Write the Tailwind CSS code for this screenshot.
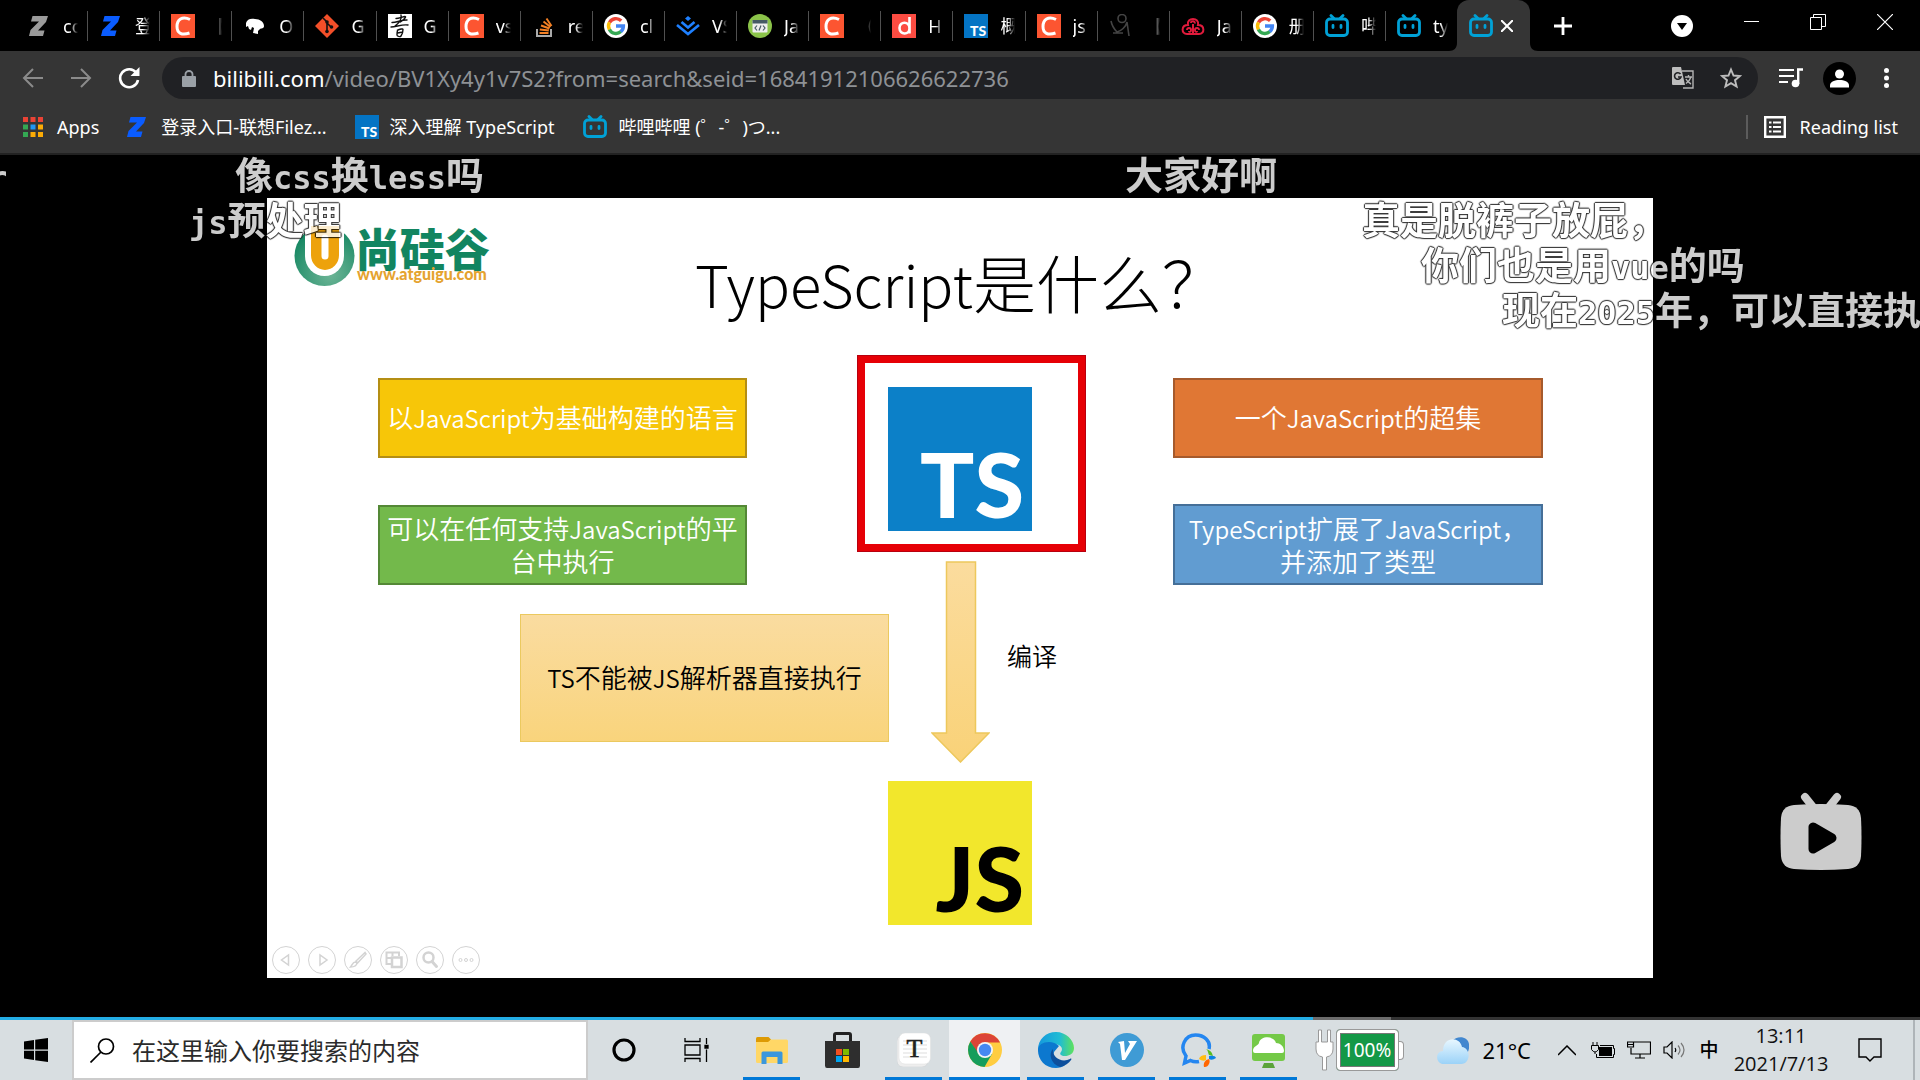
<!DOCTYPE html>
<html lang="zh-CN">
<head>
<meta charset="utf-8">
<title>TypeScript是什么？_哔哩哔哩</title>
<script src="https://cdn.jsdelivr.net/npm/@tailwindcss/browser@4"></script>
</head>
<body class="flex h-screen flex-col overflow-hidden bg-black font-['Noto_Sans','Noto_Sans_CJK_SC',sans-serif] text-white">

<svg class="hidden" aria-hidden="true">
  <symbol id="bili" viewBox="0 0 24 24"><g fill="none" stroke="#00a1d6" stroke-width="2.8" stroke-linecap="round" stroke-linejoin="round"><rect x="1.5" y="5" width="21" height="16.5" rx="3.5"/><path d="M6 1.5 9 4.5M18 1.5 15 4.5M8 11.5v2M16 11.5v2"/></g></symbol>
  <symbol id="csdn" viewBox="0 0 24 24"><path fill="#fc5531" d="M0 0h24v24H0z"/><path fill="none" stroke="#fff" stroke-width="3" d="M19 5.5C11 1.500 6 6 6 12.500c0 7 5 9 12.500 6.500"/></symbol>
  <symbol id="zed" viewBox="0 0 20 22"><path d="M3.500 1H19l-2 6-8 8.500h6.500L14 21H0l1.500-6L10 6.500H2z"/></symbol>
  <symbol id="google" viewBox="0 0 24 24"><circle cx="12" cy="12" r="12" fill="#fff"/><g fill="none" stroke-width="3.400"><path stroke="#ea4335" d="M5.500 8.500A7.400 7.400 0 0 1 17.200 6.800"/><path stroke="#fbbc05" d="M5.500 8.400a7.400 7.400 0 0 0 0 7.200"/><path stroke="#34a853" d="M5.400 15.400a7.400 7.400 0 0 0 11.500 2.200"/><path stroke="#4285f4" d="M12 12h7.400a7.400 7.400 0 0 1-2.600 5.700"/></g></symbol>
  <symbol id="tslogo" viewBox="0 0 24 24"><path fill="#0474c4" d="M0 0h24v24H0z"/><text x="6" y="22" font-family="Lato" font-weight="900" font-size="14" fill="#fff">TS</text></symbol>
</svg>

<!-- Tab strip -->
<header class="relative flex h-[51px] shrink-0 items-stretch bg-black pl-4 text-[18px]">
  <nav class="flex w-[75.7%] divide-x divide-[#505050] py-[11px] [&>a]:flex [&>a]:h-[30px] [&>a]:min-w-0 [&>a]:flex-1 [&>a]:items-center [&>a]:gap-3 [&>a]:pl-[11px] [&_svg]:size-6 [&_svg]:shrink-0 [&_span]:w-[15px] [&_span]:shrink-0 [&_span]:overflow-hidden [&_span]:whitespace-nowrap [&_span]:leading-[30px] [&_span]:[mask-image:linear-gradient(to_right,black_50%,transparent)]" aria-label="Tabs">
    <a href="#"><svg class="p-px" fill="#9a9a9a"><use href="#zed"/></svg><span>co</span></a>
    <a href="#"><svg class="p-px" fill="#0a5cff"><use href="#zed"/></svg><span>登录</span></a>
    <a href="#"><svg><use href="#csdn"/></svg><span>【</span></a>
    <a href="#"><svg viewBox="0 0 24 24"><path fill="#fff" d="M3 9c1-4 5-5 9-4 5 0 9 3 9 7 0 3-3 2-4 3l-2 2v3l-5-1 1-5-2-1-1 3-2-1-1-3-2 1z"/></svg><span>O</span></a>
    <a href="#"><svg viewBox="0 0 24 24"><path fill="#f34f29" d="m12 0 12 12-12 12L0 12z"/><path stroke="#111" stroke-width="1.600" fill="none" d="m8 4 4 4v10M12 9l4 4"/><circle cx="12" cy="8" r="1.800" fill="#111"/><circle cx="12" cy="17.500" r="1.800" fill="#111"/><circle cx="16.500" cy="13" r="1.800" fill="#111"/></svg><span>G</span></a>
    <a href="#"><svg viewBox="0 0 24 24"><path fill="#fff" d="M0 0h24v24H0z"/><path fill="none" stroke="#111" stroke-width="1.400" stroke-linecap="round" d="M8 4.500c3 0 7-2 9-2s-2 4-5 5.500M4 8.500c5 0 10-3 15-2.500M13 1c1 4-2 8-6 11M3 13c5 0 11-3 17-2M9 16.500c3-1.500 6-2 6-1s-1 5-2 6.500-4 0-4-1 0-3 .500-4.500zM9.500 19l4-.800"/></svg><span>G</span></a>
    <a href="#"><svg><use href="#csdn"/></svg><span>vs</span></a>
    <a href="#"><svg viewBox="0 0 24 24"><path fill="none" stroke="#aaa" stroke-width="2" d="M5 15v7h14v-7"/><path stroke="#f48024" stroke-width="2" d="M7.500 19h9M7.800 15.500l9 1M9 11.500l8.500 3M11.500 7.500l7 5.500M14.500 4.500l5 7.500"/></svg><span>re</span></a>
    <a href="#"><svg><use href="#google"/></svg><span>cl</span></a>
    <a href="#"><svg viewBox="0 0 24 24"><g fill="none" stroke="#1e80ff" stroke-width="2.600"><path d="m1 11 11 9 11-9M5.500 8l6.500 5.500L18.500 8"/></g><path fill="#1e80ff" d="m12 2 3 2.500-3 2.500-3-2.500z"/></svg><span>VS</span></a>
    <a href="#"><svg viewBox="0 0 24 24"><circle cx="12" cy="12" r="12" fill="#8bc34a"/><rect x="4.500" y="6" width="15" height="12.500" rx="1" fill="#eee"/><path fill="#455a64" d="M4.500 6h15v3.500h-15z"/><path fill="none" stroke="#455a64" stroke-width="1.200" d="m9 11.500-2 2.500 2 2.500M15 11.500l2 2.500-2 2.500M13 11.500l-2 5"/></svg><span>Ja</span></a>
    <a href="#"><svg><use href="#csdn"/></svg><span>（</span></a>
    <a href="#"><svg viewBox="0 0 24 24"><path fill="#fc4c42" d="M0 0h24v24H0z"/><path fill="none" stroke="#fff" stroke-width="2.600" d="M17.500 3v16.500M17.500 14.500c0 7-10 6.500-10-.500s10-7 10 .500z"/></svg><span>H</span></a>
    <a href="#"><svg><use href="#tslogo"/></svg><span>概</span></a>
    <a href="#"><svg><use href="#csdn"/></svg><span>js</span></a>
    <a href="#"><svg viewBox="0 0 24 24" fill="none" stroke="#444" stroke-width="1.600"><circle cx="13" cy="4.500" r="4"/><path d="M2 7c1 5 3 8 6 11 4-1 9-5 10-10l2 14M4 19h10"/></svg><span>【</span></a>
    <a href="#"><svg viewBox="0 0 24 24" fill="none" stroke="#e01b3c" stroke-width="2"><path d="M7 11c-2-8 12-8 10 0 7 0 7 9 1 9H6c-6 0-6-9 1-9z"/><path d="M10 9c0-3 5-2 3.500.500M6 16c0-3 4-2.500 4 0s-2 2-2 1M18 16c0-3-4-2.500-4 0s2 2 2 1M12 10v10"/></svg><span>Ja</span></a>
    <a href="#"><svg><use href="#google"/></svg><span>册</span></a>
    <a href="#"><svg><use href="#bili"/></svg><span>哔</span></a>
    <a href="#"><svg><use href="#bili"/></svg><span>ty</span></a>
  </nav>
  <div class="relative flex w-[73px] items-center gap-2 rounded-t-xl bg-[#353535] pl-3">
    <svg class="absolute bottom-0 -left-2 size-2" viewBox="0 0 8 8"><path fill="#353535" d="M8 0v8H0c5 0 8-3 8-8z"/></svg>
    <svg class="absolute -right-2 bottom-0 size-2" viewBox="0 0 8 8"><path fill="#353535" d="M0 0v8h8C3 8 0 5 0 0z"/></svg>
    <svg class="size-6"><use href="#bili"/></svg>
    <button aria-label="Close tab"><svg class="size-3" viewBox="0 0 12 12" stroke="#fff" stroke-width="2"><path d="m0 0 12 12M12 0 0 12"/></svg></button>
  </div>
  <button class="ml-6" aria-label="New tab"><svg class="size-[18px]" viewBox="0 0 18 18" stroke="#fff" stroke-width="2.800"><path d="M9 0v18M0 9h18"/></svg></button>
  <div class="ml-auto flex h-[43px] items-center gap-[51px] pr-[27px]">
    <button class="mt-2" aria-label="Tab search"><svg class="size-[22px]" viewBox="0 0 22 22"><circle cx="11" cy="11" r="11" fill="#fff"/><path d="M6 8h10l-5 7z"/></svg></button>
    <button aria-label="Minimize"><svg class="h-4 w-[15px]" viewBox="0 0 15 16" stroke="#fff"><path d="M0 7.500h15"/></svg></button>
    <button aria-label="Restore"><svg class="size-4" viewBox="0 0 16 16" fill="none" stroke="#fff"><path d="M.500 3.500h11v12H.500zM3.500 3.500V.500h12v12h-4"/></svg></button>
    <button aria-label="Close"><svg class="size-4" viewBox="0 0 16 16" stroke="#fff" stroke-width="1.200"><path d="m0 0 16 16M16 0 0 16"/></svg></button>
  </div>
</header>

<!-- Address bar -->
<div class="flex h-[54px] shrink-0 items-center bg-[#353535] pr-[31px] pl-[22px]">
  <div class="flex w-[140px] items-center gap-[26px]">
    <button aria-label="Back"><svg class="size-[22px]" viewBox="0 0 22 22" fill="none" stroke="#8b8b8b" stroke-width="2"><path d="M21 11H2M11 2l-9 9 9 9"/></svg></button>
    <button aria-label="Forward"><svg class="size-[22px]" viewBox="0 0 22 22" fill="none" stroke="#8b8b8b" stroke-width="2"><path d="M1 11h19M11 2l9 9-9 9"/></svg></button>
    <button aria-label="Reload"><svg class="size-[22px]" viewBox="0 0 22 22"><path fill="none" stroke="#fff" stroke-width="2.600" d="M18.500 6A9 9 0 1 0 20 13"/><path fill="#fff" d="M21.500 0v9h-9z"/></svg></button>
  </div>
  <div class="flex h-[42px] flex-1 items-center rounded-full bg-[#202124] pr-4 pl-5">
    <svg class="h-[17px] w-[14px]" viewBox="0 0 14 17"><path fill="#9aa0a6" d="M1 6h12a1 1 0 0 1 1 1v9a1 1 0 0 1-1 1H1a1 1 0 0 1-1-1V7a1 1 0 0 1 1-1z"/><path fill="none" stroke="#9aa0a6" stroke-width="1.800" d="M3.500 6V4a3.500 3 0 0 1 7 0v2"/></svg>
    <a href="#" class="ml-[17px] text-[22px] leading-[28px] text-[#8e9195]"><span class="text-white">bilibili.com</span>/video/BV1Xy4y1v7S2?from=search&amp;seid=16841912106626622736</a>
    <button class="ml-auto" aria-label="Translate"><svg class="size-[22px]" viewBox="0 0 22 22"><path fill="none" stroke="#b5b5b5" stroke-width="1.400" d="M10 4h11v17H11M13 10h7M16.500 8v2M19 10c-1 3-3 5-5 6.500M14 12c1 2 3 4 5 5"/><path fill="#bdbdbd" d="M1 0h8l4 18H1a1 1 0 0 1-1-1V1a1 1 0 0 1 1-1z"/><path fill="none" stroke="#202124" stroke-width="1.600" d="M8.500 7A3.300 3.300 0 1 0 9 10H6"/></svg></button>
    <button class="ml-[26px]" aria-label="Bookmark this page"><svg class="size-[22px]" viewBox="0 0 22 22" fill="none" stroke="#bdbdbd" stroke-width="1.900"><path d="m11 2.500 2.500 6 6.500.500-5 4.200 1.600 6.300-5.600-3.400-5.600 3.400L7 13.200 2 9l6.500-.500z"/></svg></button>
  </div>
  <button class="ml-[21px]" aria-label="Media controls"><svg class="h-[20px] w-6" viewBox="0 0 24 20"><path stroke="#fff" stroke-width="2.200" d="M0 2h15M0 8h15M0 14h9"/><circle cx="16.500" cy="15.500" r="3.800" fill="#fff"/><path fill="none" stroke="#fff" stroke-width="2.400" d="M19.200 16V1.500H24"/></svg></button>
  <button class="ml-5" aria-label="Profile"><svg class="size-[33px]" viewBox="0 0 33 33"><circle cx="16.500" cy="16.500" r="16.500"/><circle cx="16.500" cy="12" r="4.500" fill="#fff"/><path fill="#fff" d="M7 25.500v-2c0-4 5-5.500 9.500-5.500s9.500 1.500 9.500 5.500v2z"/></svg></button>
  <button class="ml-7" aria-label="Menu"><svg class="h-5 w-[5px]" viewBox="0 0 5 20" fill="#fff"><circle cx="2.500" cy="2.500" r="2.500"/><circle cx="2.500" cy="10" r="2.500"/><circle cx="2.500" cy="17.500" r="2.500"/></svg></button>
</div>

<!-- Bookmarks -->
<nav class="flex h-[50px] shrink-0 items-center border-b-2 border-[#222] bg-[#353535] pr-[22px] pb-1 pl-[23px] text-[18px] leading-6" aria-label="Bookmarks">
  <a href="#" class="flex items-center gap-[14px]"><svg class="size-5" viewBox="0 0 20 20"><path fill="#ea4335" d="M0 0h5v5H0zM7.500 0h5v5h-5zM15 0h5v5h-5z"/><path fill="#34a853" d="M0 7.500h5v5H0zM0 15h5v5H0z"/><path fill="#2196f3" d="M7.500 7.500h5v5h-5z"/><path fill="#fbab05" d="M15 7.500h5v5h-5zM7.500 15h5v5h-5zM15 15h5v5h-5z"/></svg>Apps</a>
  <a href="#" class="ml-7 flex items-center gap-[14px]"><svg class="h-6 w-5" fill="#0a5cff"><use href="#zed"/></svg>登录入口-联想Filez...</a>
  <a href="#" class="ml-7 flex items-center gap-[11px]"><svg class="size-6"><use href="#tslogo"/></svg>深入理解 TypeScript</a>
  <a href="#" class="ml-7 flex items-center gap-3"><svg class="size-6"><use href="#bili"/></svg>哔哩哔哩 (゜-゜)つ...</a>
  <button class="ml-auto flex items-center border-l-2 border-[#5c5c5c] pl-4"><svg class="mr-[14px] size-[22px]" viewBox="0 0 22 22"><path fill="none" stroke="#fff" stroke-width="2.400" d="M1.200 1.200h19.600v19.600H1.200z"/><path stroke="#fff" stroke-width="2" d="M5 6.500h2.500M9 6.500h8M5 11h2.500M9 11h8M5 15.500h2.500M9 15.500h8"/></svg>Reading list</button>
</nav>

<!-- Video player -->
<main class="relative flex min-h-0 flex-1 flex-col items-center justify-center overflow-hidden bg-black">
  <section class="relative aspect-[1386/780] h-[calc(100%-85px)] shrink-0 overflow-hidden bg-white font-['Noto_Sans_CJK_SC',sans-serif] text-[26px] leading-8 text-black [&_span]:text-[24px]">
    <!-- brand -->
    <div class="absolute top-[28px] left-[27px] flex items-center">
      <svg class="h-[60px] w-[61px]" viewBox="0 0 61 60"><defs><radialGradient id="g" cx=".6" cy=".8" r=".8"><stop offset="0" stop-color="#6db596"/><stop offset="1" stop-color="#128560"/></radialGradient></defs><circle cx="30.500" cy="30" r="30" fill="url(#g)"/><path fill="#fff" d="M11 0h39v30a19.500 20 0 0 1-39 0z"/><path fill="#eda20c" d="M17 0h28v29a14 15 0 0 1-28 0z"/><path stroke="#fff" stroke-width="7" stroke-linecap="round" d="M31 12v18"/></svg>
      <div class="font-black text-[#128560]"><div class="text-[45px] leading-[36px]">尚硅谷</div><div class="ml-0.5 font-['Lato'] text-[16px] leading-4 font-black text-[#e5a32f]">www.atguigu.com</div></div>
    </div>
    <h1 class="absolute inset-x-0 top-[39px] text-center text-[63px] leading-[88px] font-light"><span class="text-[58px]!">TypeScript</span>是什么？</h1>
    <div class="absolute top-[180px] left-[111px] flex h-[80px] w-[369px] items-center justify-center border-2 border-[#b48e14] bg-[#f7c608] text-center font-[350] text-white"><p>以<span>JavaScript</span>为基础构建的语言</p></div>
    <div class="absolute top-[307px] left-[111px] flex h-[80px] w-[369px] items-center justify-center border-2 border-[#548836] bg-[#73b94b] text-center font-[350] text-white"><p>可以在任何支持<span>JavaScript</span>的平<br>台中执行</p></div>
    <div class="absolute top-[180px] left-[906px] flex h-[80px] w-[370px] items-center justify-center border-2 border-[#a65a2c] bg-[#e07734] text-center font-[350] text-white"><p>一个<span>JavaScript</span>的超集</p></div>
    <div class="absolute top-[306px] left-[906px] flex h-[81px] w-[370px] items-center justify-center border-2 border-[#456f98] bg-[#619cd1] text-center font-[350] text-white"><p><span>TypeScript</span>扩展了<span>JavaScript</span>，<br>并添加了类型</p></div>
    <div class="absolute top-[157px] left-[590px] h-[197px] w-[229px] border-8 border-[#e60006] outline-1 -outline-offset-1 outline-[#b8000e]"></div>
    <div class="absolute top-[189px] left-[621px] flex size-[144px] items-end justify-end bg-[#0c80c8] pr-2 font-['Lato'] text-[90px] leading-[96px] font-black text-white">TS</div>
    <svg class="absolute top-[363px] left-[664px] h-[202px] w-[59px]" viewBox="0 0 59 202"><defs><linearGradient id="a" x1="0" y1="0" x2="0" y2="1"><stop offset="0" stop-color="#fbdc9e"/><stop offset="1" stop-color="#f9d278"/></linearGradient></defs><path fill="url(#a)" stroke="#edc85c" stroke-width="1.500" d="M15.500 1h29v171h13.500L29.500 201 1 172h14.500z"/></svg>
    <div class="absolute top-[441px] left-[740px] text-[25px] font-[350]">编译</div>
    <div class="absolute top-[416px] left-[253px] flex h-[128px] w-[369px] items-center justify-center border border-[#ebc95f] bg-linear-to-b from-[#fadca0] to-[#f9d47c] font-[350]"><p><span>TS</span>不能被<span>JS</span>解析器直接执行</p></div>
    <div class="absolute top-[583px] left-[621px] flex size-[144px] items-end justify-end bg-[#f2e72c] pr-2 font-['Lato'] text-[90px] leading-[96px] font-black">JS</div>
    <!-- slide-show controls -->
    <div class="absolute bottom-1 left-[5px] flex gap-2 [&_svg]:size-7" >
      <button aria-label="Previous"><svg viewBox="0 0 28 28" fill="none" stroke="#d3d3d3"><circle cx="14" cy="14" r="13.500"/><path stroke-width="1.500" d="M16.500 9v10l-7-5z"/></svg></button>
      <button aria-label="Next"><svg viewBox="0 0 28 28" fill="none" stroke="#d3d3d3"><circle cx="14" cy="14" r="13.500"/><path stroke-width="1.500" d="M12 9v10l7-5z"/></svg></button>
      <button aria-label="Pen"><svg viewBox="0 0 28 28" fill="none" stroke="#d3d3d3"><circle cx="14" cy="14" r="13.500"/><path stroke-width="1.500" d="M21 6.500 12 15l1.500 2L22 8zM11.500 16c-3 0-3 3-5 5 3 0 6-1 6.500-4z"/></svg></button>
      <button aria-label="All slides"><svg viewBox="0 0 28 28" fill="none" stroke="#d3d3d3"><circle cx="14" cy="14" r="13.500"/><path stroke-width="2" d="M11 18H6.500V6.500H19V10M6.500 12H11M12.500 6.500V10"/><path stroke-width="2.500" d="M12 11.500h9.500V21H12z"/></svg></button>
      <button aria-label="Zoom"><svg viewBox="0 0 28 28" fill="none" stroke="#d3d3d3"><circle cx="14" cy="14" r="13.500"/><circle cx="12.500" cy="11.500" r="5" stroke-width="2.500"/><path stroke-width="3" stroke-linecap="round" d="m16 15.500 4.500 5"/></svg></button>
      <button aria-label="More"><svg viewBox="0 0 28 28" fill="none" stroke="#d3d3d3"><circle cx="14" cy="14" r="13.500"/><circle cx="8.500" cy="14" r="1.500"/><circle cx="14" cy="14" r="1.500"/><circle cx="19.500" cy="14" r="1.500"/></svg></button>
    </div>
  </section>

  <!-- Scrolling comments -->
  <div class="absolute inset-x-0 -top-[5px] bottom-0 font-['Noto_Sans_CJK_SC',sans-serif] text-[38px] leading-[45px] font-bold whitespace-nowrap text-white opacity-80 [text-shadow:1px_0_1px_#000,0_1px_1px_#000,-1px_0_1px_#000,0_-1px_1px_#000,0_0_2px_#000] [&>p]:absolute [&_span]:font-['DejaVu_Sans_Mono'] [&_span]:text-[32px]">
    <p class="top-0 -left-3"><span>r</span></p>
    <p class="top-0 left-[235px]">像<span>css</span>换<span>less</span>吗</p>
    <p class="top-0 left-[1125px]">大家好啊</p>
    <p class="top-[45px] left-[189px]"><span>js</span>预处理</p>
    <p class="top-[45px] left-[1362px]">真是脱裤子放屁，</p>
    <p class="top-[90px] left-[1421px]">你们也是用<span>vue</span>的吗</p>
    <p class="top-[135px] left-[1502px]">现在<span>2025</span>年，可以直接执行</p>
  </div>

  <button class="absolute right-[58px] bottom-[150px]" aria-label="Play"><svg class="h-[78px] w-[82px]" viewBox="0 0 82 78"><path stroke="#ccc" stroke-width="8" stroke-linecap="round" d="m25 5 8 10M57 5l-8 10"/><path fill="#ccc" d="M14 13q27-2 54 0 12 1 13 13 1 19 0 38-1 12-13 13-27 2-54 0Q2 76 1 64q-1-19 0-38 1-12 13-13z"/><path stroke="#000" stroke-width="9" stroke-linejoin="round" d="M33 35v22l19-11z"/></svg></button>
  <div class="absolute inset-x-0 bottom-0 flex h-[3px] bg-[#333]"><div class="bg-[#23ade5]" style="width:68.4%"></div><div class="bg-[#6b6b6b]" style="width:4.05%"></div></div>
</main>

<!-- Taskbar -->
<footer class="flex h-[60px] shrink-0 items-stretch bg-[#d8dee1] text-black">
  <button class="flex w-[72px] items-center justify-center" aria-label="Start"><svg class="size-6" viewBox="0 0 24 24"><path d="M0 3.500 10 2v9.500H0zM11.200 1.800 24 0v11.500H11.200zM0 12.700h10V22L0 20.500zM11.200 12.700H24V24l-12.800-1.800z"/></svg></button>
  <label class="flex w-[516px] items-center border-2 border-[#ccc] bg-white pl-4">
    <svg class="size-[25px] shrink-0" viewBox="0 0 25 25" fill="none" stroke="#000" stroke-width="1.700"><circle cx="16" cy="8.500" r="7.500"/><path d="M11 14 .500 24.500"/></svg>
    <input type="text" aria-label="搜索" placeholder="在这里输入你要搜索的内容" class="ml-[17px] min-w-0 flex-1 bg-transparent pt-0.5 text-[24px] leading-8 outline-none placeholder:text-[#2b2b2b]">
  </label>
  <div class="flex [&>button]:flex [&>button]:w-[71px] [&>button]:items-center [&>button]:justify-center">
    <button aria-label="Cortana"><svg class="size-6" viewBox="0 0 24 24"><circle cx="12" cy="12" r="10" fill="none" stroke="#000" stroke-width="3.200"/></svg></button>
    <button class="ml-0.5" aria-label="Task view"><svg class="h-6 w-[25px]" viewBox="0 0 25 24" fill="none" stroke="#000" stroke-width="1.300"><path d="M1 0v3.500h15V0M1 7h15v10H1zM1 24v-3.500h15V24M22.500 0v6M22.500 11.500V24"/><path fill="#000" d="M21 7.500h3v2.500h-3z"/></svg></button>
    <button class="relative ml-1" aria-label="File Explorer"><svg class="h-[27px] w-8" viewBox="0 0 32 27"><path fill="#dd9a04" d="M0 1.500Q0 0 1.500 0h11L15 2.500 13 6H0z"/><path fill="#ffd766" d="M0 5h12l3-2.500h15.500q1.500 0 1.500 1.500v20.500q0 1.500-1.500 1.500h-29Q0 26 0 24.500z"/><path fill="#3b97dc" d="M7 14.500h18q1.500 0 1.500 1.500v11h-5v-7h-11v7h-5V16q0-1.500 1.500-1.500z"/></svg><i class="absolute bottom-0 h-[3px] w-[57px] bg-[#0078d7]"></i></button>
    <button aria-label="Microsoft Store"><svg class="h-9 w-[35px]" viewBox="0 0 35 36"><path fill="none" stroke="#222" stroke-width="3" d="M9.500 12V3q0-1.500 1.500-1.500h13q1.500 0 1.500 1.500v9"/><path fill="#2e2e2e" d="M0 9h35v24.500q0 2.500-2 2.500H2q-2 0-2-2.500z"/><path fill="#f25022" d="M11 17h6v6h-6z"/><path fill="#7fba00" d="M18 17h6v6h-6z"/><path fill="#00a4ef" d="M11 24h6v6h-6z"/><path fill="#ffb900" d="M18 24h6v6h-6z"/></svg></button>
    <button class="relative" aria-label="Typora"><svg class="size-[34px]" viewBox="0 0 34 34"><rect x="0" y="2" width="31" height="32" rx="6" fill="#eee" stroke="#c9cdd0" stroke-width=".500"/><rect x="2" y="0" width="31.500" height="31" rx="6" fill="#fff" stroke="#ddd" stroke-width=".500"/><path stroke="#ddd" d="M6 8h24M6 12h24M6 16h24M6 20h24M6 24h24"/><text x="17.500" y="24" text-anchor="middle" font-family="Liberation Serif" font-size="26" fill="#222" stroke="#222" stroke-width=".600">T</text></svg><i class="absolute bottom-0 h-[3px] w-[57px] bg-[#0078d7]"></i></button>
    <button class="relative bg-[#eff1f3]" aria-label="Google Chrome"><svg class="size-[34px]" viewBox="0 0 34 34"><circle cx="17" cy="17" r="17" fill="#ffcd41"/><path fill="#dc4437" d="M2.300 8.500A17 17 0 0 1 32 9.500H17l-7.500 11z"/><path fill="#159d5c" d="M2.300 8.500A17 17 0 0 0 16.500 34l7.500-13-13 0z"/><circle cx="17" cy="17" r="8" fill="#f4f4f4"/><circle cx="17" cy="17" r="6.200" fill="#4688f1"/></svg><i class="absolute inset-x-0 bottom-0 h-[3px] bg-[#0078d7]"></i></button>
    <button class="relative" aria-label="Microsoft Edge"><svg class="size-9" viewBox="0 0 36 36"><defs><linearGradient id="e1"><stop offset="0" stop-color="#1598dd"/><stop offset=".6" stop-color="#20bcd4"/><stop offset="1" stop-color="#5fe25b"/></linearGradient></defs><path fill="url(#e1)" d="M0 18C0 7 8 0 18 0s18 8 18 16c0 6-5 8-9 8-4 0-6-2-4-4 3-4-1-8-7-8-7 0-14 5-14 12z"/><path fill="#0c78cf" d="M0 18c0 10 7 18 18 18 3 0 7-1 9-3-9 1-13-7-11-13l5-6C14 7 0 10 0 18z"/><path fill="#0c4f9c" d="M15 17c-5 5-2 15 7 18 5-1 9-4 11-7 1-1 0-2-1-1-8 4-18-1-17-10z"/></svg><i class="absolute bottom-0 h-[3px] w-[57px] bg-[#0078d7]"></i></button>
    <button class="relative" aria-label="VNote"><svg class="size-[34px]" viewBox="0 0 34 34"><circle cx="17" cy="17" r="17" fill="#3f9bd5"/><path fill="#fff" d="m8 9 6-1 1 12 5-9-2-3h9L15 27h-3l-2-16z"/></svg><i class="absolute bottom-0 h-[3px] w-[57px] bg-[#0078d7]"></i></button>
    <button class="relative" aria-label="WeCom"><svg class="size-[36px]" viewBox="0 0 36 36"><path fill="none" stroke="#2486f0" stroke-width="3.500" d="M29 17C31 9 24 3 15.500 3 5 3-1 15 6 24l-1.500 7 6-2.500q4 2 8.500 1"/><path fill="#58bd22" d="M25 17c3 0 3 4 4 6l4 1q-1-6-8-7z"/><path fill="#f60" d="M24 35c-1-4 1-7 5-8 2 3-1 9-5 8z"/><path fill="#ffbd14" d="M26 23q-6 0-7 4 4 3 7 1z"/><path fill="#0a82e6" d="M29 24q6-1 7 2-4 3-7 1z"/></svg><i class="absolute bottom-0 h-[3px] w-[57px] bg-[#0078d7]"></i></button>
    <button class="relative" aria-label="Cloud desktop"><svg class="h-[38px] w-[33px]" viewBox="0 0 33 38"><path fill="#74c947" d="M3 3h27q3 0 3 3v21q0 3-3 3H3q-3 0-3-3V6q0-3 3-3z"/><path fill="#fff" d="M1 20c0-5 5-5 6-8C8 5 22 4 24 12c4 0 8 3 8 8q0 2-2 2H3q-2 0-2-2z"/><path fill="#5aa33a" d="M12 32h9l2 5H10z"/></svg><i class="absolute bottom-0 h-[3px] w-[57px] bg-[#0078d7]"></i></button>
  </div>
  <div class="ml-auto flex items-center">
    <svg class="mr-0.5 h-[42px] w-[19px]" viewBox="0 0 19 42"><path fill="#fff" stroke="#999" d="M3.500 1h3v12h6V1h3v12H18v7q0 7-6.500 8v13h-4V28Q1 27 1 20v-7h2.500z"/></svg>
    <div class="flex h-[42px] w-[63px] items-center justify-center rounded border border-[#999] bg-[#149847] text-[19px] leading-6 text-white shadow-[inset_0_0_0_3px_#fff,inset_0_0_0_4px_#777]">100%</div><i class="h-[19px] w-[5px] rounded-r border border-l-0 border-[#999] bg-white"></i>
    <button class="ml-[33px] flex items-center gap-[14px] text-[22px] leading-8"><svg class="h-[27px] w-8" viewBox="0 0 32 27"><defs><linearGradient id="c" x2="0" y2="1"><stop offset="0" stop-color="#e8f7ff"/><stop offset="1" stop-color="#9bd2f8"/></linearGradient></defs><path fill="#4287cf" d="M15 4C20-2 31-1 32 7c1 6-2 10-4 12z"/><path fill="url(#c)" d="M7 27c-9 0-9-13-1-13C6-1 23-1 25 10c9 1 9 17-1 17z"/></svg>21°C</button>
    <button class="ml-[27px]" aria-label="Show hidden icons"><svg class="h-[11px] w-[18px]" viewBox="0 0 18 11" fill="none" stroke="#000" stroke-width="1.500"><path d="m0 10 9-9 9 9"/></svg></button>
    <svg class="ml-[15px] h-4 w-6" viewBox="0 0 24 16"><path d="M8 5h13v9H8z"/><path fill="none" stroke="#000" d="M9 3.500h13.500v3h1v6h-1v3h-17V12M2 0v3M6 0v3M.500 3.500h7v4q-3.500 5-7 0zM4 10v2"/></svg>
    <svg class="ml-3 h-[18px] w-6" viewBox="0 0 24 18" fill="none" stroke="#000" stroke-width="1.200"><path d="M7 1h16.500v12H4V7M8 17h10M13 13v4M.500 1h6v5h-6zM.500 3.500h6"/></svg>
    <svg class="ml-3 h-[18px] w-[23px]" viewBox="0 0 23 18" fill="none" stroke="#000" stroke-width="1.200"><path d="M1 6h3l5-5v16l-5-5H1zM12 7q1.500 2 0 4"/><path stroke="#777" d="M15 4.500q4 4.500 0 9M18 2q6 7 0 14"/></svg>
    <button class="ml-3 w-[22px] text-[19px] font-medium">中</button>
    <div class="ml-3 w-[98px] text-center font-['Open_Sans'] text-[20px] leading-[28px] whitespace-nowrap text-[#111]"><div>13:11</div><div>2021/7/13</div></div>
    <button class="ml-7" aria-label="Notifications"><svg class="size-6" viewBox="0 0 24 24" fill="none" stroke="#000" stroke-width="1.400"><path d="M1 1h22v18h-7l-4 4-4-4H1z"/></svg></button>
    <div class="ml-[31px] h-[60px] w-[7px] border-l-2 border-[#aeb4b8]"></div>
  </div>
</footer>
</body>
</html>
